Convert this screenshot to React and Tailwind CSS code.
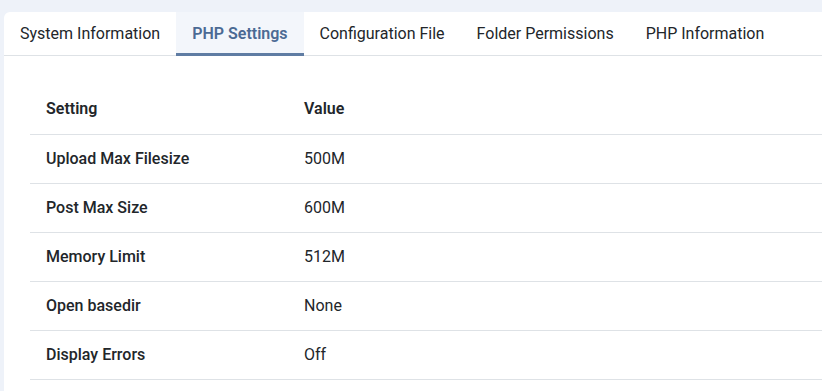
import React, { useState } from 'react'

const TABS = ['System Information', 'PHP Settings', 'Configuration File', 'Folder Permissions', 'PHP Information']

const ROWS = [
  ['Upload Max Filesize', '500M'],
  ['Post Max Size', '600M'],
  ['Memory Limit', '512M'],
  ['Open basedir', 'None'],
  ['Display Errors', 'Off'],
]

export default function App() {
  const [active, setActive] = useState(1)
  return (
    <div className="min-h-screen bg-[#eef2f9] pt-3 pl-1 font-['Roboto',sans-serif] text-[#22262a]">
      <div className="bg-white rounded-tl-md min-h-[379px]">
        {/* Tabs */}
        <div className="flex border-b border-[#dee2e6] h-11">
          {TABS.map((tab, i) => (
            <button
              key={tab}
              type="button"
              onClick={() => setActive(i)}
              className={
                i === active
                  ? 'px-4 pt-[3px] text-base font-semibold text-[#4b6a94] bg-[#f3f6fb] border-b-[3px] border-[#5f7ca3] -mb-px'
                  : 'px-4 pt-[3px] text-base text-[#22262a] border-b-[3px] border-transparent -mb-px'
              }
            >
              {tab}
            </button>
          ))}
        </div>

        {/* Settings table */}
        <div className="pt-[29px] pl-[26px]">
          <table className="w-full border-collapse text-base">
            <thead>
              <tr className="border-b border-[#dee2e6]">
                <th className="w-[258px] h-[49px] px-4 text-left font-semibold">Setting</th>
                <th className="h-[49px] px-4 text-left font-semibold">Value</th>
              </tr>
            </thead>
            <tbody>
              {ROWS.map(([name, value]) => (
                <tr key={name} className="border-b border-[#dee2e6]">
                  <td className="h-[49px] px-4 font-medium">{name}</td>
                  <td className="h-[49px] px-4">{value}</td>
                </tr>
              ))}
            </tbody>
          </table>
        </div>
      </div>
    </div>
  )
}
